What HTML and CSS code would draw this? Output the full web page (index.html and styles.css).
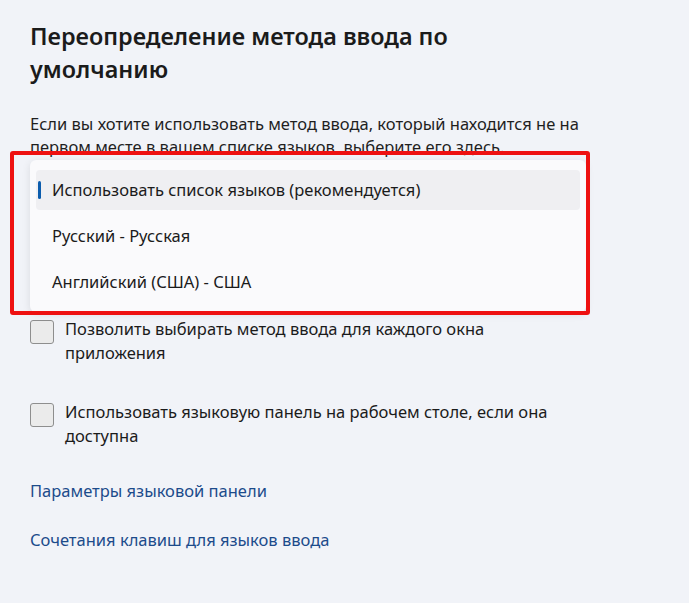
FILE: index.html
```html
<!DOCTYPE html>
<html lang="ru">
<head>
<meta charset="utf-8">
<title>Переопределение метода ввода по умолчанию</title>
<link rel="stylesheet" href="styles.css">
</head>
<body>
<main class="page">
  <h1 class="title">Переопределение метода ввода по умолчанию</h1>
  <p class="desc">Если вы хотите использовать метод ввода, который находится не на первом месте в вашем списке языков, выберите его здесь.</p>

  <div class="combo-area">
    <div class="flyout" role="listbox">
      <div class="option selected" role="option"><span class="indicator"></span>Использовать список языков (рекомендуется)</div>
      <div class="option" role="option">Русский - Русская</div>
      <div class="option" role="option">Английский (США) - США</div>
    </div>
    <div class="highlight-box"></div>
  </div>

  <div class="checks">
    <label class="check">
      <span class="box"></span>
      <span class="check-text">Позволить выбирать метод ввода для каждого окна приложения</span>
    </label>
    <label class="check">
      <span class="box"></span>
      <span class="check-text">Использовать языковую панель на рабочем столе, если она доступна</span>
    </label>
  </div>

  <nav class="links">
    <a class="link" href="#">Параметры языковой панели</a>
    <a class="link" href="#">Сочетания клавиш для языков ввода</a>
  </nav>
</main>
</body>
</html>
```

FILE: styles.css
```css
html, body {
  margin: 0;
  padding: 0;
}

body {
  background: #f1f3f8;
  color: #1b1b1b;
  font-family: "Noto Sans", "Open Sans", sans-serif;
  font-size: 16.5px;
  width: 689px;
  height: 603px;
  overflow: hidden;
}

.page {
  position: relative;
  padding: 20px 0 0 30px;
  width: 575px;
}

.title {
  margin: 0;
  width: 500px;
  font-size: 23.4px;
  line-height: 33px;
  font-weight: 600;
  color: #1b1b1b;
}

.desc {
  margin: 26px 0 0 0;
  line-height: 23px;
  color: #1f1f1f;
}

.combo-area {
  position: relative;
  height: 147px;
}

.flyout {
  position: absolute;
  left: 0;
  top: 2px;
  width: 544px;
  padding: 10px 6px 10px 6px;
  display: flex;
  flex-direction: column;
  gap: 6px;
  background: #fafafc;
  border-radius: 6px;
  box-shadow: 0 2px 8px rgba(0, 0, 0, 0.10);
  z-index: 1;
}

.option {
  position: relative;
  height: 40px;
  line-height: 40px;
  padding-left: 16px;
  border-radius: 4px;
  color: #1b1b1b;
  white-space: nowrap;
}

.option.selected {
  background: #efeff2;
}

.indicator {
  position: absolute;
  left: 2px;
  top: 11px;
  width: 3px;
  height: 18px;
  border-radius: 2px;
  background: #0b5cad;
}

.highlight-box {
  position: absolute;
  left: -20px;
  top: -7px;
  width: 572px;
  height: 156px;
  border: 4px solid #ee1111;
  border-radius: 3px;
  z-index: 2;
  pointer-events: none;
}

.checks {
  margin-top: 12px;
  display: flex;
  flex-direction: column;
  gap: 35px;
}

.check {
  display: flex;
  align-items: flex-start;
  gap: 11px;
  line-height: 24px;
}

.box {
  flex: none;
  width: 22px;
  height: 22px;
  margin-top: 3px;
  border: 1px solid #8e8e8e;
  border-radius: 3px;
  background: #ebebeb;
}

.check-text {
  width: 500px;
}

.links {
  margin-top: 31px;
  display: flex;
  flex-direction: column;
  align-items: flex-start;
  gap: 25px;
}

.link {
  line-height: 24px;
  color: #1c4b8b;
  text-decoration: none;
}
```
